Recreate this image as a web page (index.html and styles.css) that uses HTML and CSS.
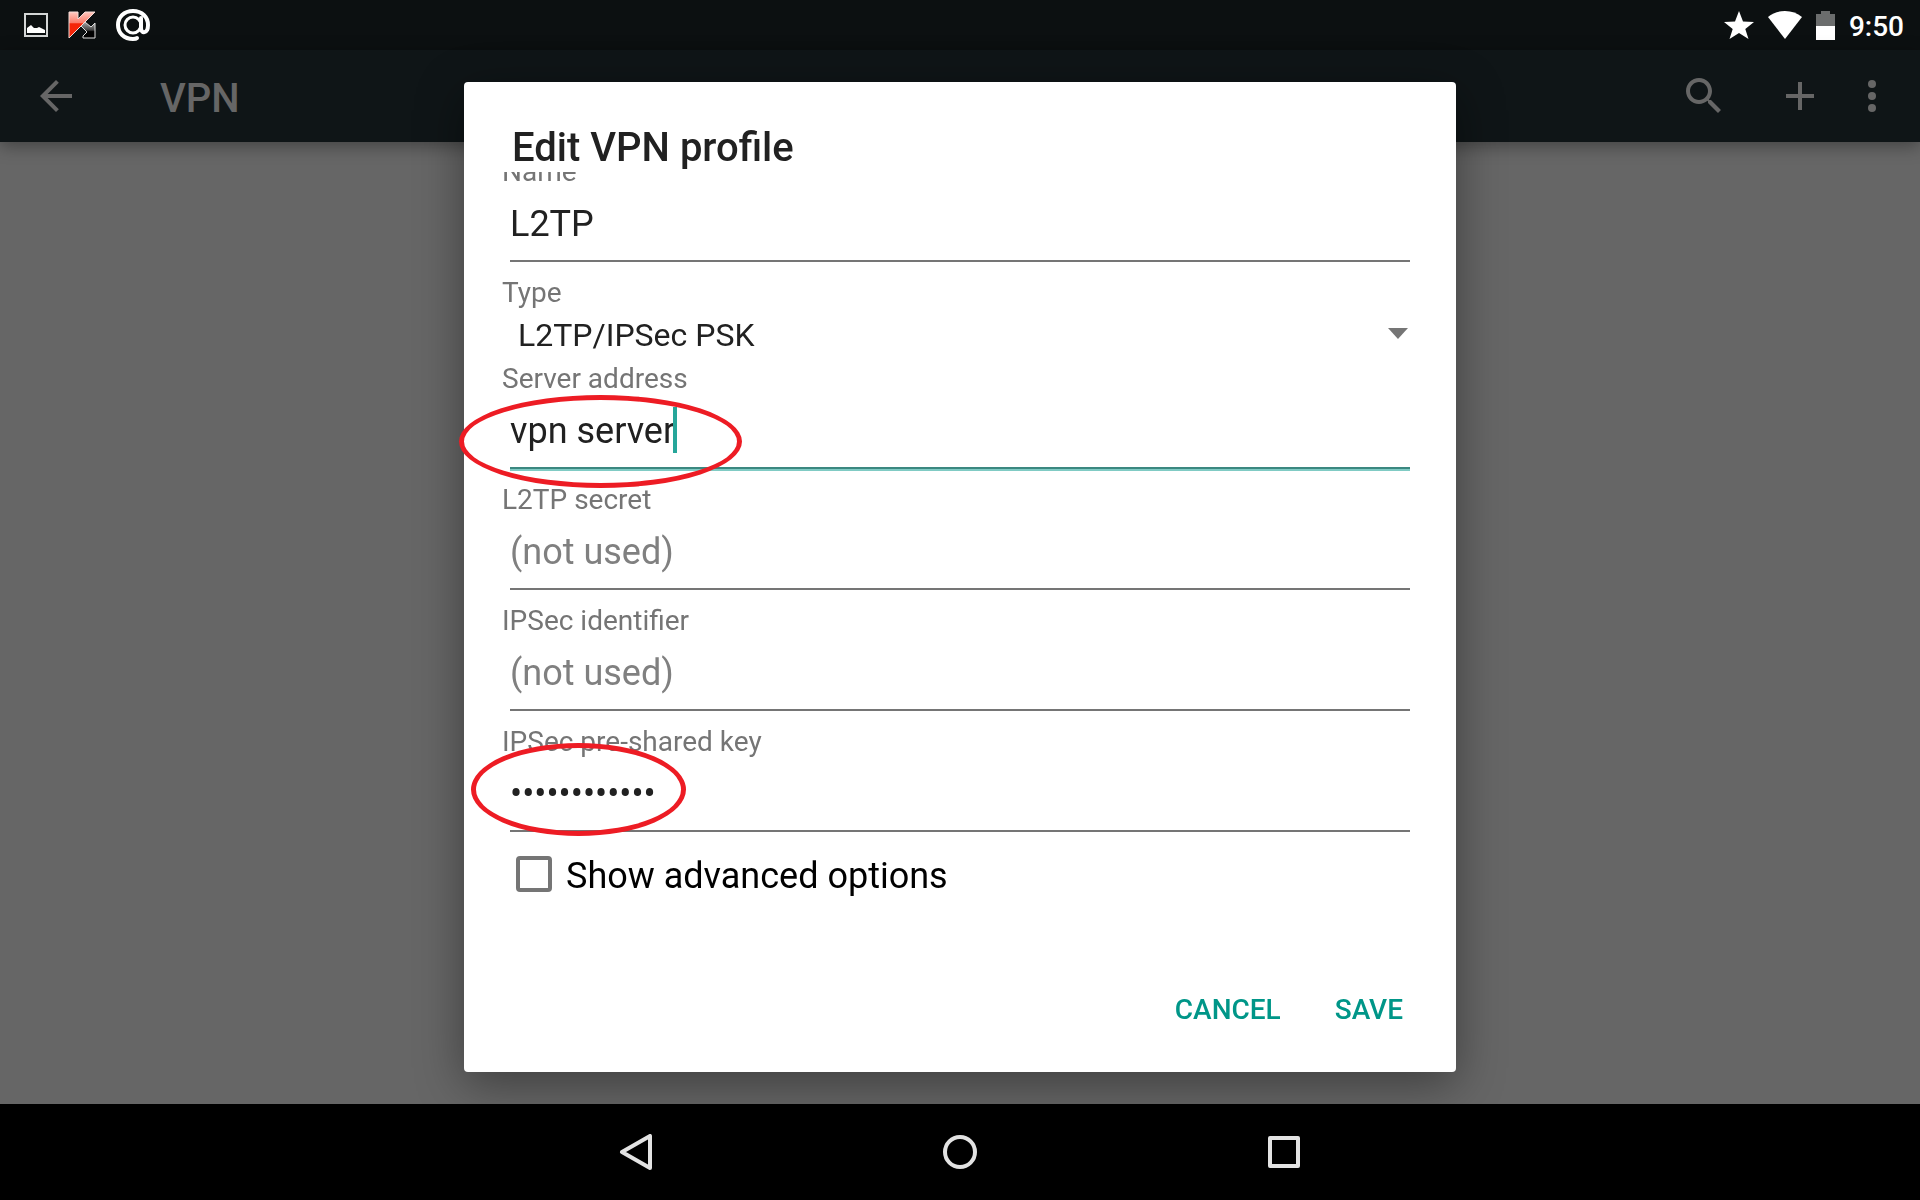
FILE: index.html
```html
<!DOCTYPE html>
<html lang="en">
<head>
    <meta charset="UTF-8">
    <meta name="viewport" content="width=device-width, initial-scale=1.0">
    <title>VPN</title>
    <link rel="stylesheet" href="styles.css">
</head>
<body>

    <!-- Status bar -->
    <div class="status-bar">
        <div class="status-left">
            <svg width="24" height="24" viewBox="0 0 24 24">
                <rect x="1" y="1" width="22" height="22" fill="none" stroke="#d4d6d6" stroke-width="2"/>
                <path d="M3 20v-5l4-3 3 3h3l2-1 4 2 2 1v3z" fill="#fff"/>
            </svg>
            <svg width="28" height="28" viewBox="0 0 28 28">
                <defs>
                    <linearGradient id="red" x1="0" y1="0" x2="0" y2="1">
                        <stop offset="0" stop-color="#ffc9c0"/>
                        <stop offset="0.42" stop-color="#fb7a68"/>
                        <stop offset="0.45" stop-color="#f52508"/>
                        <stop offset="1" stop-color="#f52508"/>
                    </linearGradient>
                    <linearGradient id="dark" x1="0" y1="0" x2="0" y2="1">
                        <stop offset="0" stop-color="#aaa"/>
                        <stop offset="0.5" stop-color="#444"/>
                        <stop offset="0.6" stop-color="#000"/>
                    </linearGradient>
                </defs>
                <path d="M13 15l4-4 6 5 4-4v15H15v-2l4-4z" fill="url(#dark)" stroke="#ddd"/>
                <path d="M1 1h9v7l7-7h10L1 27z" fill="url(#red)" stroke="#f3dcd8"/>
            </svg>
            <svg width="34" height="32" viewBox="0 0 34 32" fill="none" stroke="#fff" stroke-width="4" stroke-linecap="round">
                <circle cx="17" cy="16" r="8" stroke-width="3"/>
                <path d="M25 9v10c0 6 7 6 7-3 0-8-6-14-15-14S2 8 2 16s6 14 15 14c2 0 3 0 4-1"/>
            </svg>
        </div>
        <div class="status-right">
            <svg width="30" height="28" viewBox="0 0 30 28">
                <path d="M15 0l4 10.500 11 .5-8.700 7L24.500 28 15 22 5.500 28l3.200-10L0 11l11-.5z" fill="#fff"/>
            </svg>
            <svg width="34" height="28" viewBox="0 0 34 28">
                <path d="M0 6Q7 0 17 0t17 6L17 28z" fill="#fff"/>
            </svg>
            <svg width="19" height="29" viewBox="0 0 19 29">
                <path d="M5 0h9v3h5v12H0V3h5z" fill="#6b6d6d"/>
                <path d="M0 15h19v14H0z" fill="#fff"/>
            </svg>
            <span class="clock">9:50</span>
        </div>
    </div>

    <!-- App bar -->
    <header class="app-bar">
        <button class="back" aria-label="Navigate up">
            <svg width="48" height="48" viewBox="0 0 24 24"><path d="M20 11H7.830l5.590-5.590L12 4l-8 8 8 8 1.410-1.410L7.830 13H20v-2z"/></svg>
        </button>
        <h1>VPN</h1>
        <button class="action" aria-label="Search">
            <svg width="48" height="48" viewBox="0 0 24 24"><path d="M15.500 14h-.79l-.28-.27C15.410 12.590 16 11.110 16 9.500 16 5.910 13.090 3 9.500 3S3 5.910 3 9.500 5.910 16 9.500 16c1.610 0 3.090-.59 4.230-1.570l.27.28v.79l5 4.990L20.490 19l-4.990-5zm-6 0C7.010 14 5 11.990 5 9.500S7.010 5 9.500 5 14 7.010 14 9.500 11.990 14 9.500 14z"/></svg>
        </button>
        <button class="action" aria-label="Add VPN profile">
            <svg width="48" height="48" viewBox="0 0 24 24"><path d="M19 13h-6v6h-2v-6H5v-2h6V5h2v6h6v2z"/></svg>
        </button>
        <button class="more" aria-label="More options">
            <svg width="48" height="48" viewBox="0 0 24 24"><circle cx="12" cy="6" r="2"/><circle cx="12" cy="12" r="2"/><circle cx="12" cy="18" r="2"/></svg>
        </button>
    </header>

    <main class="content"></main>

    <!-- Edit dialog -->
    <div class="overlay">
        <div class="dialog" role="dialog" aria-labelledby="dialog-title">
            <h2 id="dialog-title">Edit VPN profile</h2>
            <div class="scroll-area">
                <form class="profile-form">
                    <div class="field">
                        <label for="name">Name</label>
                        <input type="text" id="name" value="L2TP">
                    </div>
                    <div class="field">
                        <label for="type">Type</label>
                        <select id="type">
                            <option>L2TP/IPSec PSK</option>
                        </select>
                        <svg class="arrow" width="20" height="11" viewBox="0 0 20 11"><path d="M0 0h20L10 11z" fill="#757575"/></svg>
                    </div>
                    <div class="field">
                        <label for="server">Server address</label>
                        <input type="text" id="server" class="focused" value="vpn server">
                        <span class="caret"></span>
                        <span class="mark mark-server"></span>
                    </div>
                    <div class="field">
                        <label for="secret">L2TP secret</label>
                        <input type="text" id="secret" placeholder="(not used)">
                    </div>
                    <div class="field">
                        <label for="identifier">IPSec identifier</label>
                        <input type="text" id="identifier" placeholder="(not used)">
                    </div>
                    <div class="field">
                        <label for="psk">IPSec pre-shared key</label>
                        <input type="password" id="psk" value="presharedkey">
                        <span class="mark mark-key"></span>
                    </div>
                    <div class="check-row">
                        <input type="checkbox" id="advanced">
                        <label for="advanced">Show advanced options</label>
                    </div>
                </form>
            </div>
            <div class="buttons">
                <button>CANCEL</button>
                <button>SAVE</button>
            </div>
        </div>
    </div>

    <!-- Navigation bar -->
    <nav class="nav-bar">
        <button aria-label="Back">
            <svg width="36" height="36" viewBox="0 0 36 36"><path d="M4 18L32 2v32z"/></svg>
        </button>
        <button aria-label="Home">
            <svg width="36" height="36" viewBox="0 0 36 36"><circle cx="18" cy="18" r="15"/></svg>
        </button>
        <button aria-label="Recent apps">
            <svg width="36" height="36" viewBox="0 0 36 36"><rect x="4" y="4" width="28" height="28"/></svg>
        </button>
    </nav>

</body>
</html>
```

FILE: styles.css
```css
* {
    box-sizing: border-box;
}
body {
    margin: 0;
    height: 100vh;
    display: flex;
    flex-direction: column;
    overflow: hidden;
    background: #666666;
    font-family: Roboto, sans-serif;
    color: #212121;
}
h1, h2 {
    margin: 0;
    font-size: 40px;
    line-height: 47px;
    font-weight: 500;
}
button {
    padding: 0;
    border: none;
    background: none;
    font-family: inherit;
    cursor: pointer;
}
svg {
    display: block;
}

/* status bar */
.status-bar {
    height: 50px;
    padding: 0 16px 0 24px;
    display: flex;
    justify-content: space-between;
    align-items: center;
    background: #0c1011;
}
.status-left, .status-right {
    display: flex;
    align-items: center;
}
.status-left {
    gap: 20px;
}
.status-right {
    gap: 14px;
}
.clock {
    color: white;
    font-size: 28px;
    line-height: 33px;
    font-weight: 500;
    padding-top: 2px;
}

/* app bar */
.app-bar {
    height: 92px;
    padding: 0 24px 0 32px;
    display: flex;
    align-items: center;
    background: #0f1517;
    box-shadow: 0 4px 16px rgba(0, 0, 0, 0.35);
}
.app-bar svg {
    fill: #666666;
    margin: 0 auto;
}
.app-bar h1 {
    flex: 1;
    padding: 4px 0 0 80px;
    color: #666666;
}
.action {
    width: 96px;
}
.content {
    flex: 1;
}

/* dialog */
.overlay {
    position: fixed;
    top: 50px;
    right: 0;
    bottom: 96px;
    left: 0;
    padding: 32px;
    display: flex;
    justify-content: center;
}
.dialog {
    width: 100%;
    max-width: 992px;
    display: flex;
    flex-direction: column;
    background: white;
    border-radius: 4px;
    box-shadow: 0 12px 48px rgba(0, 0, 0, 0.4);
}
.dialog h2 {
    padding: 42px 48px 1px;
}
.scroll-area {
    flex: 1;
    min-height: 0;
    clip-path: inset(0 -20px);
}
/* scrolled down a little, so the first label is cut */
.profile-form {
    margin-top: -17px;
    padding: 0 38px;
}
.field {
    position: relative;
    display: flex;
    flex-direction: column;
}
.field label {
    font-size: 28px;
    line-height: 33px;
    color: #757575;
}
.field input {
    height: 74px;
    margin: 0 8px 14px;
    padding: 0;
    border: none;
    border-bottom: 2px solid #757575;
    border-radius: 0;
    background: none;
    outline: none;
    font-family: inherit;
    font-size: 36px;
    color: #212121;
}
.field input::placeholder {
    color: #808080;
    opacity: 1;
}
.field input.focused {
    border-bottom-color: #3b8880;
    box-shadow: 0 2px #80cbc4;
}
.field select {
    height: 53px;
    padding: 0 48px 2px 16px;
    border: none;
    background: none;
    appearance: none;
    outline: none;
    font-family: inherit;
    font-size: 32px;
    color: #212121;
}
.arrow {
    position: absolute;
    right: 10px;
    top: 52px;
    pointer-events: none;
}
.caret {
    position: absolute;
    left: 171px;
    top: 45px;
    width: 4px;
    height: 46px;
    background: #26a69a;
}
.mark {
    position: absolute;
    z-index: 1;
    height: 93px;
    border: 5px solid #ed1c24;
    border-radius: 50%;
    pointer-events: none;
}
.mark-server {
    left: -43px;
    top: 33px;
    width: 283px;
}
.mark-key {
    left: -31px;
    top: 18px;
    width: 215px;
}
.check-row {
    height: 56px;
    padding-left: 14px;
    display: flex;
    align-items: center;
    gap: 14px;
}
.check-row input {
    width: 36px;
    height: 36px;
    margin: 0;
    appearance: none;
    border: 4px solid #757575;
    border-radius: 4px;
}
.check-row label {
    padding-top: 3px;
    font-size: 36px;
    line-height: 42px;
    color: black;
}
.buttons {
    padding: 0 29px 31px;
    display: flex;
    justify-content: flex-end;
    gap: 6px;
}
.buttons button {
    height: 64px;
    padding: 0 24px;
    font-size: 28px;
    font-weight: 500;
    color: #009688;
}

/* navigation bar */
.nav-bar {
    height: 96px;
    display: flex;
    justify-content: center;
    background: black;
    z-index: 1;
}
.nav-bar button {
    width: 324px;
}
.nav-bar svg {
    margin: 0 auto;
    fill: none;
    stroke: #e3e3e3;
    stroke-width: 4;
    stroke-linejoin: round;
}
```
